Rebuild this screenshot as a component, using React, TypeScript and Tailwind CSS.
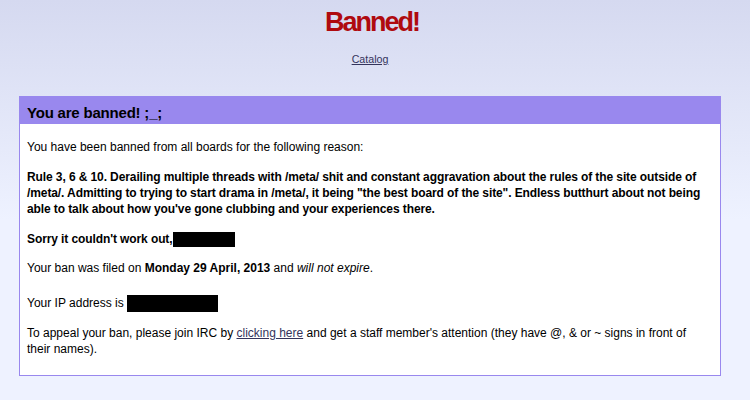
import React from "react";

export default function App() {
  return (
    <div className="min-h-[400px] w-[750px] bg-[#eef2ff] bg-[linear-gradient(to_bottom,#d5d9f0_0px,#eef2ff_220px)] font-['Liberation_Sans',Arial,sans-serif] text-black">
      <div className="w-[740px] flex flex-col">
        <h1 className="pt-[9px] pl-[4px] text-center text-[27px] leading-[27px] font-bold tracking-[-2px] text-[#af0a0f]">
          Banned!
        </h1>
        <div className="mt-[17px] text-center text-[10.67px] leading-[12px]">
          <a href="#" className="text-[#34345c] underline">
            Catalog
          </a>
        </div>
        <div className="mx-[19px] mt-[31px] border border-[#9988ee] bg-white">
          <h2 className="bg-[#9988ee] px-[7px] pt-[6px] pb-[2px] text-[15px] leading-[19px] font-bold text-black tracking-[-0.2px]">
            You are banned! ;_;
          </h2>
          <div className="text-[12px] leading-[16px]">
            <p className="px-[7px] mt-[15px]">
              You have been banned from all boards for the following reason:
            </p>
            <p className="px-[7px] mt-[14px] font-bold whitespace-nowrap tracking-[-0.1px]">
              Rule 3, 6 &amp; 10. Derailing multiple threads with /meta/ shit and constant aggravation about the rules of the site outside of
              <br />
              /meta/. Admitting to trying to start drama in /meta/, it being "the best board of the site". Endless butthurt about not being
              <br />
              able to talk about how you've gone clubbing and your experiences there.
            </p>
            <p className="px-[7px] mt-[14px] font-bold tracking-[-0.1px]">
              Sorry it couldn't work out,
              <span className="inline-block align-middle bg-black w-[62px] h-[15px] my-[-2px]"></span>
            </p>
            <p className="px-[7px] mt-[13px]">
              Your ban was filed on <b>Monday 29 April, 2013</b> and <em>will not expire</em>.
            </p>
            <p className="px-[7px] mt-[19px]">
              Your IP address is{" "}
              <span className="inline-block align-middle bg-black w-[91px] h-[17px] my-[-3px]"></span>
            </p>
            <p className="px-[7px] mt-[14px] mb-[18px]">
              To appeal your ban, please join IRC by{" "}
              <a href="#" className="text-[#34345c] underline">
                clicking here
              </a>{" "}
              and get a staff member's attention (they have @, &amp; or ~ signs in front of
              <br />
              their names).
            </p>
          </div>
        </div>
      </div>
    </div>
  );
}
